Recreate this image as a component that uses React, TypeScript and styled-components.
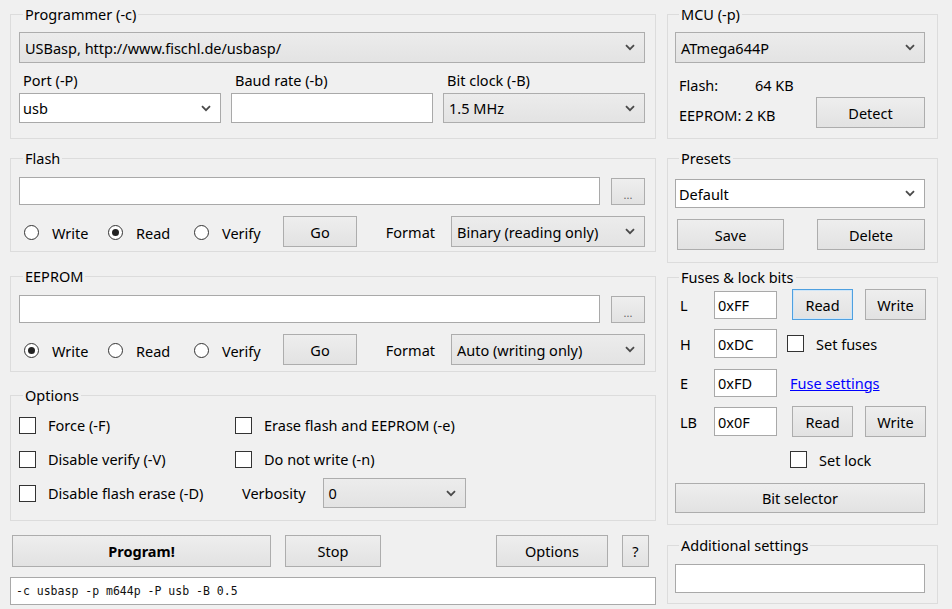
import React from "react";
import styled, { createGlobalStyle } from "styled-components";

const Global = createGlobalStyle`
  html, body { margin: 0; padding: 0; background: #f0f0f0; }
  body { font-family: "Noto Sans", "Liberation Sans", sans-serif; font-size: 14.5px; color: #000; }
  * { box-sizing: border-box; }
`;

const Window = styled.div`
  width: 952px;
  height: 609px;
  padding: 5px 0 0 10px;
  display: flex;
  gap: 11px;
  overflow: hidden;
  background: #f0f0f0;
`;

const Column = styled.div<{ $w: number }>`
  width: ${(p) => p.$w}px;
  display: flex;
  flex-direction: column;
`;

const Group = styled.fieldset<{ $h: number; $mt?: number; $pt?: number; $right?: boolean }>`
  margin: ${(p) => p.$mt ?? 0}px 0 0 0;
  height: ${(p) => p.$h}px;
  border: 1px solid #dcdcdc;
  padding: ${(p) => p.$pt ?? 10}px ${(p) => (p.$right ? 12 : 10)}px 0 ${(p) => (p.$right ? 7 : 8)}px;
  min-width: 0;
  display: block;
`;

const Title = styled.legend`
  padding: 0 2px;
  margin-left: 4px;
  line-height: 18px;
  font-size: 14.5px;
`;

const ComboBox = styled.div<{ $edit?: boolean; $h?: number; $w?: number }>`
  display: flex;
  align-items: center;
  justify-content: space-between;
  height: ${(p) => p.$h ?? 30}px;
  width: ${(p) => (p.$w ? `${p.$w}px` : "auto")};
  flex: ${(p) => (p.$w ? "none" : "1 1 auto")};
  padding: 0 9px 0 ${(p) => (p.$edit ? 3 : 5)}px;
  border: 1px solid ${(p) => (p.$edit ? "#a9a9a9" : "#adadad")};
  background: ${(p) => (p.$edit ? "#fff" : "linear-gradient(#ececec, #e3e3e3)")};
  white-space: nowrap;
`;

const Chevron = () => (
  <svg width="10" height="7" viewBox="0 0 10 7">
    <path d="M1 1.2 L5 5.2 L9 1.2" fill="none" stroke="#4a4a4a" strokeWidth="1.8" />
  </svg>
);

const Combo: React.FC<{ edit?: boolean; h?: number; w?: number; children?: React.ReactNode }> = ({
  edit,
  h,
  w,
  children,
}) => (
  <ComboBox $edit={edit} $h={h} $w={w}>
    <span>{children}</span>
    <Chevron />
  </ComboBox>
);

const TextBox = styled.div<{ $h?: number; $w?: number }>`
  height: ${(p) => p.$h ?? 28}px;
  width: ${(p) => (p.$w ? `${p.$w}px` : "auto")};
  flex: ${(p) => (p.$w ? "none" : "1 1 auto")};
  background: #fff;
  border: 1px solid #a9a9a9;
  display: flex;
  align-items: center;
  padding-left: 3px;
  white-space: nowrap;
`;

const Btn = styled.button<{ $w?: number; $h?: number; $focus?: boolean; $bold?: boolean; $ml?: string }>`
  width: ${(p) => (p.$w ? `${p.$w}px` : "100%")};
  height: ${(p) => p.$h ?? 31}px;
  margin: 0 0 0 ${(p) => p.$ml ?? "0"};
  padding: 0;
  flex: none;
  font-family: inherit;
  font-size: 14.5px;
  font-weight: ${(p) => (p.$bold ? 700 : 400)};
  color: #000;
  background: linear-gradient(#eeeeee, #e2e2e2);
  border: 1px solid ${(p) => (p.$focus ? "#4fa0e0" : "#adadad")};
  box-shadow: ${(p) => (p.$focus ? "inset 0 0 0 1px #cfe6f8" : "none")};
`;

const DotsBtn = styled(Btn)`
  font-size: 11px;
  color: #666;
  padding-top: 6px;
`;

/* Programmer */
const FieldRow = styled.div`
  display: grid;
  grid-template-columns: repeat(3, 1fr);
  column-gap: 10px;
  margin-top: 8px;
`;

const Field = styled.div`
  display: flex;
  flex-direction: column;
  gap: 4px;
`;

const FieldLabel = styled.div`
  line-height: 18px;
  padding-left: 4px;
`;

/* Flash / EEPROM */
const FileRow = styled.div`
  display: flex;
  align-items: center;
  gap: 11px;
`;

const ActionRow = styled.div`
  display: flex;
  align-items: center;
  height: 31px;
  margin-top: 11px;
`;

const RadioSet = styled.div`
  display: grid;
  grid-template-columns: 84px 86px 89px;
  align-items: center;
  padding-left: 5px;
`;

const RadioItem = styled.label`
  display: flex;
  align-items: center;
  gap: 13px;
  padding-top: 2px;
`;

const RadioCircle = styled.span<{ $on?: boolean }>`
  width: 15px;
  height: 15px;
  border-radius: 50%;
  border: 1px solid #333;
  background: #fff;
  display: flex;
  align-items: center;
  justify-content: center;
  flex: none;
  &::after {
    content: "";
    width: 7px;
    height: 7px;
    border-radius: 50%;
    background: ${(p) => (p.$on ? "#222" : "transparent")};
  }
`;

const Spacer = styled.div`
  flex: 1 1 auto;
`;

const InlineLabel = styled.span<{ $mr?: number; $ml?: number }>`
  margin-right: ${(p) => p.$mr ?? 0}px;
  margin-left: ${(p) => p.$ml ?? 0}px;
  white-space: nowrap;
`;

/* Options */
const OptGrid = styled.div`
  display: grid;
  grid-template-columns: 216px 1fr;
  grid-auto-rows: 34px;
`;

const CheckItem = styled.label<{ $ml?: number }>`
  display: flex;
  align-items: center;
  gap: 12px;
  margin-left: ${(p) => p.$ml ?? 0}px;
  white-space: nowrap;
`;

const CheckBox = styled.span`
  width: 17px;
  height: 17px;
  border: 1px solid #333;
  background: #fff;
  flex: none;
`;

const VerbosityCell = styled.div`
  display: flex;
  align-items: center;
  padding-left: 7px;
`;

/* bottom */
const ButtonBar = styled.div`
  display: flex;
  align-items: center;
  height: 32px;
  margin-top: 14px;
  padding: 0 7px 0 2px;
`;

const CommandBox = styled.div`
  margin-top: 10px;
  height: 28px;
  background: #fff;
  border: 1px solid #a9a9a9;
  display: flex;
  align-items: center;
  padding-left: 5px;
  font-family: "DejaVu Sans Mono", "Liberation Mono", monospace;
  font-size: 11.5px;
  color: #111;
  white-space: pre;
`;

/* MCU */
const InfoLine = styled.div<{ $h: number; $mt: number }>`
  display: flex;
  align-items: center;
  height: ${(p) => p.$h}px;
  margin-top: ${(p) => p.$mt}px;
  padding-left: 4px;
`;

const InfoKey = styled.span`
  width: 76px;
`;

const InfoText = styled.span`
  padding-top: 4px;
`;

/* Presets */
const PresetButtons = styled.div`
  display: flex;
  justify-content: space-between;
  margin-top: 11px;
  padding-left: 2px;
`;

/* Fuses */
const FuseRow = styled.div`
  display: flex;
  align-items: center;
  height: 31px;
  & + & {
    margin-top: 8px;
  }
`;

const FuseLabel = styled.span`
  width: 39px;
  padding-left: 5px;
  flex: none;
`;

const FuseLink = styled.a`
  color: #0000ff;
  text-decoration: underline;
  margin-left: 13px;
  cursor: pointer;
`;

const LockRow = styled.div`
  display: flex;
  height: 19px;
  margin-top: 13px;
  padding-left: 115px;
`;

const WideBtnWrap = styled.div`
  margin-top: 14px;
  display: flex;
`;

const Radio: React.FC<{ on?: boolean; label: string }> = ({ on, label }) => (
  <RadioItem>
    <RadioCircle $on={on} />
    {label}
  </RadioItem>
);

const Check: React.FC<{ label: string; ml?: number }> = ({ label, ml }) => (
  <CheckItem $ml={ml}>
    <CheckBox />
    {label}
  </CheckItem>
);

const MemoryGroup: React.FC<{
  title: string;
  checked: "Write" | "Read" | "Verify";
  format: string;
  h: number;
  mt: number;
}> = ({ title, checked, format, h, mt }) => (
  <Group $h={h} $mt={mt} $pt={10}>
    <Title>{title}</Title>
    <FileRow>
      <TextBox $h={28} />
      <DotsBtn $w={34} $h={27}>...</DotsBtn>
    </FileRow>
    <ActionRow>
      <RadioSet>
        {(["Write", "Read", "Verify"] as const).map((r) => (
          <Radio key={r} label={r} on={r === checked} />
        ))}
      </RadioSet>
      <Btn $w={74} $h={31}>
        Go
      </Btn>
      <Spacer />
      <InlineLabel $mr={16}>Format</InlineLabel>
      <Combo w={194} h={31}>
        {format}
      </Combo>
    </ActionRow>
  </Group>
);

export default function App() {
  return (
    <>
      <Global />
      <Window>
        <Column $w={646}>
          <Group $h={134} $pt={9}>
            <Title>Programmer (-c)</Title>
            <Combo h={31}>USBasp, http://www.fischl.de/usbasp/</Combo>
            <FieldRow>
              <Field>
                <FieldLabel>Port (-P)</FieldLabel>
                <Combo edit h={30}>
                  usb
                </Combo>
              </Field>
              <Field>
                <FieldLabel>Baud rate (-b)</FieldLabel>
                <TextBox $h={29} />
              </Field>
              <Field>
                <FieldLabel>Bit clock (-B)</FieldLabel>
                <Combo h={30}>1.5 MHz</Combo>
              </Field>
            </FieldRow>
          </Group>

          <MemoryGroup title="Flash" checked="Read" format="Binary (reading only)" h={103} mt={10} />
          <MemoryGroup title="EEPROM" checked="Write" format="Auto (writing only)" h={105} mt={15} />

          <Group $h={135} $mt={14} $pt={4}>
            <Title>Options</Title>
            <OptGrid>
              <Check label="Force (-F)" />
              <Check label="Erase flash and EEPROM (-e)" />
              <Check label="Disable verify (-V)" />
              <Check label="Do not write (-n)" />
              <Check label="Disable flash erase (-D)" />
              <VerbosityCell>
                <InlineLabel $mr={17}>Verbosity</InlineLabel>
                <Combo w={143} h={30}>
                  0
                </Combo>
              </VerbosityCell>
            </OptGrid>
          </Group>

          <ButtonBar>
            <Btn $w={259} $h={32} $bold>
              Program!
            </Btn>
            <Btn $w={96} $h={32} $ml="14px">
              Stop
            </Btn>
            <Btn $w={112} $h={32} $ml="auto">
              Options
            </Btn>
            <Btn $w={27} $h={32} $ml="14px">
              ?
            </Btn>
          </ButtonBar>
          <CommandBox>-c usbasp -p m644p -P usb -B 0.5</CommandBox>
        </Column>

        <Column $w={271}>
          <Group $h={134} $pt={9} $right>
            <Title>MCU (-p)</Title>
            <Combo h={31}>ATmega644P</Combo>
            <InfoLine $h={18} $mt={13}>
              <InfoKey>Flash:</InfoKey>
              <span>64 KB</span>
            </InfoLine>
            <InfoLine $h={31} $mt={3}>
              <InfoText>EEPROM: 2 KB</InfoText>
              <Spacer />
              <Btn $w={109} $h={31}>
                Detect
              </Btn>
            </InfoLine>
          </Group>

          <Group $h={114} $mt={10} $pt={12} $right>
            <Title>Presets</Title>
            <Combo edit h={29}>
              Default
            </Combo>
            <PresetButtons>
              <Btn $w={107} $h={31}>
                Save
              </Btn>
              <Btn $w={108} $h={31}>
                Delete
              </Btn>
            </PresetButtons>
          </Group>

          <Group $h={257} $mt={5} $pt={3} $right>
            <Title>Fuses &amp; lock bits</Title>
            <FuseRow>
              <FuseLabel>L</FuseLabel>
              <TextBox $w={63} $h={28}>
                0xFF
              </TextBox>
              <Btn $w={61} $h={31} $ml="15px" $focus>
                Read
              </Btn>
              <Btn $w={61} $h={31} $ml="12px">
                Write
              </Btn>
            </FuseRow>
            <FuseRow>
              <FuseLabel>H</FuseLabel>
              <TextBox $w={63} $h={29}>
                0xDC
              </TextBox>
              <Check label="Set fuses" ml={10} />
            </FuseRow>
            <FuseRow>
              <FuseLabel>E</FuseLabel>
              <TextBox $w={63} $h={28}>
                0xFD
              </TextBox>
              <FuseLink>Fuse settings</FuseLink>
            </FuseRow>
            <FuseRow>
              <FuseLabel>LB</FuseLabel>
              <TextBox $w={63} $h={29}>
                0x0F
              </TextBox>
              <Btn $w={61} $h={31} $ml="15px">
                Read
              </Btn>
              <Btn $w={61} $h={31} $ml="12px">
                Write
              </Btn>
            </FuseRow>
            <LockRow>
              <Check label="Set lock" />
            </LockRow>
            <WideBtnWrap>
              <Btn $h={30}>Bit selector</Btn>
            </WideBtnWrap>
          </Group>

          <Group $h={68} $mt={11} $pt={10} $right>
            <Title>Additional settings</Title>
            <TextBox $h={29} />
          </Group>
        </Column>
      </Window>
    </>
  );
}
